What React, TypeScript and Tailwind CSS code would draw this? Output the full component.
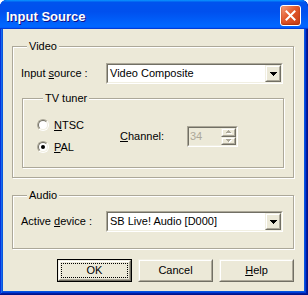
import React from "react";

type BoxProps = {
  className?: string;
  inner?: string;
  children?: React.ReactNode;
};

// classic 3D sunken edge (edit fields, combo boxes)
function Sunken({ className = "", inner = "", children }: BoxProps) {
  return (
    <div className={`border border-t-[#aca899] border-l-[#aca899] border-r-white border-b-white ${className}`}>
      <div className={`h-full border border-t-[#716f64] border-l-[#716f64] border-r-[#f1efe2] border-b-[#f1efe2] ${inner}`}>
        {children}
      </div>
    </div>
  );
}

// classic 3D raised edge (push buttons)
function Raised({ className = "", inner = "", children }: BoxProps) {
  return (
    <div className={`border border-t-[#f1efe2] border-l-[#f1efe2] border-r-[#716f64] border-b-[#716f64] ${className}`}>
      <div className={`h-full border border-t-white border-l-white border-r-[#aca899] border-b-[#aca899] bg-[#ece9d8] ${inner}`}>
        {children}
      </div>
    </div>
  );
}

function DownArrow() {
  return (
    <svg width="7" height="4" viewBox="0 0 7 4" shapeRendering="crispEdges">
      <rect x="0" y="0" width="7" height="1" fill="#000" />
      <rect x="1" y="1" width="5" height="1" fill="#000" />
      <rect x="2" y="2" width="3" height="1" fill="#000" />
      <rect x="3" y="3" width="1" height="1" fill="#000" />
    </svg>
  );
}

function SpinArrow({ up }: { up?: boolean }) {
  const rows = up ? [[2, 0, 1], [1, 1, 3], [0, 2, 5]] : [[0, 0, 5], [1, 1, 3], [2, 2, 1]];
  return (
    <svg width="6" height="4" viewBox="0 0 6 4" shapeRendering="crispEdges">
      {rows.map(([x, y, w]) => (
        <rect key={`w${y}`} x={x + 1} y={y + 1} width={w} height="1" fill="#fff" />
      ))}
      {rows.map(([x, y, w]) => (
        <rect key={`g${y}`} x={x} y={y} width={w} height="1" fill="#aca899" />
      ))}
    </svg>
  );
}

function Combo({ text }: { text: string }) {
  return (
    <Sunken className="w-[177px] h-[21px]" inner="bg-white flex items-center">
      <span className="flex-1 pl-[2px] leading-[13px] whitespace-nowrap">{text}</span>
      <Raised className="w-[16px] h-[17px] shrink-0" inner="flex items-center justify-center">
        <DownArrow />
      </Raised>
    </Sunken>
  );
}

function Radio({ checked, children }: { checked?: boolean; children: React.ReactNode }) {
  return (
    <div className="h-[16px] flex items-center gap-[5px]">
      <div className="w-[12px] h-[12px] rounded-full border border-t-[#aca899] border-l-[#aca899] border-r-white border-b-white">
        <div className="w-full h-full rounded-full border border-t-[#716f64] border-l-[#716f64] border-r-[#f1efe2] border-b-[#f1efe2] bg-white flex items-center justify-center">
          {checked && <div className="w-[4px] h-[4px] rounded-full bg-black" />}
        </div>
      </div>
      <span className="leading-[13px]">{children}</span>
    </div>
  );
}

const groupBox =
  "border border-[#aca899] shadow-[inset_1px_1px_0_#fff,1px_1px_0_#fff]";
const legend = "ml-[6px] px-[2px] leading-[13px] bg-[#ece9d8]";

export default function App() {
  return (
    <div className="w-[308px] h-[295px] flex flex-col rounded-t-[7px] overflow-hidden bg-[#0855dd] shadow-[inset_-1px_-1px_#00138c,inset_1px_1px_#0831d9,inset_-2px_-2px_#001ea0,inset_2px_2px_#166aee,inset_-3px_-3px_#003bda,inset_3px_3px_#0855dd] font-['Liberation_Sans',Arial,sans-serif] text-[11px] text-black select-none">
      {/* Title bar */}
      <div className="h-[29px] shrink-0 flex items-start pl-[6px] pr-[7px] pt-[4px] bg-[linear-gradient(180deg,#0997ff,#0053ee_8%,#0050ee_40%,#06f_88%,#06f_93%,#005bff_95%,#003dd7_96%,#003dd7)]">
        <span className="flex-1 mt-[5px] text-white font-bold text-[13px] leading-[15px] [text-shadow:1px_1px_#0f1089]">
          Input Source
        </span>
        <div className="mt-[1px] w-[21px] h-[21px] rounded-[3px] border border-white bg-[linear-gradient(135deg,#f6a27f,#e2582b_45%,#c63d16)] shadow-[inset_0_-1px_2px_#a8300c] flex items-center justify-center">
          <svg width="11" height="11" viewBox="0 0 11 11">
            <path d="M1.5 1.5L9.5 9.5M9.5 1.5L1.5 9.5" stroke="#fff" strokeWidth="2" strokeLinecap="square" />
          </svg>
        </div>
      </div>

      {/* Client area */}
      <div className="flex-1 ml-[3px] mr-[4px] mb-[4px] bg-[#ece9d8] flex flex-col pt-[11px] pl-[9px]">
        <fieldset className={`w-[282px] pl-[8px] pt-[10px] pb-[9px] ${groupBox}`}>
          <legend className={legend}>Video</legend>
          <div className="flex items-center h-[21px]">
            <span className="w-[85px] leading-[13px]">
              Input <span className="underline">s</span>ource :
            </span>
            <Combo text="Video Composite" />
          </div>

          <fieldset className={`mt-[8px] ml-[1px] w-[262px] pl-[14px] pt-[12px] pb-[12px] ${groupBox}`}>
            <legend className={legend}>TV tuner</legend>
            <div className="flex items-center">
              <div className="w-[83px] flex flex-col gap-[6px]">
                <Radio>
                  <span className="underline">N</span>TSC
                </Radio>
                <Radio checked>
                  <span className="underline">P</span>AL
                </Radio>
              </div>
              <span className="w-[67px] leading-[13px]">
                <span className="underline">C</span>hannel:
              </span>
              <Sunken className="w-[51px] h-[21px]" inner="bg-[#ece9d8] flex">
                <span className="flex-1 pl-[1px] self-center leading-[13px] text-[#aca899]">34</span>
                <div className="w-[15px] flex flex-col">
                  <Raised className="h-[9px]" inner="flex items-center justify-center">
                    <SpinArrow up />
                  </Raised>
                  <Raised className="h-[8px]" inner="flex items-center justify-center">
                    <SpinArrow />
                  </Raised>
                </div>
              </Sunken>
            </div>
          </fieldset>
        </fieldset>

        <fieldset className={`mt-[11px] w-[282px] pl-[8px] pt-[9px] pb-[16px] ${groupBox}`}>
          <legend className={legend}>Audio</legend>
          <div className="flex items-center h-[21px]">
            <span className="w-[85px] leading-[13px]">
              Active <span className="underline">d</span>evice :
            </span>
            <Combo text="SB Live! Audio [D000]" />
          </div>
        </fieldset>

        {/* Buttons */}
        <div className="mt-[10px] flex justify-end gap-[6px] pr-[10px]">
          <div className="w-[75px] h-[23px] border border-black">
            <Raised className="h-full" inner="flex">
              <div className="flex-1 m-[1px] border border-dotted border-black flex items-center justify-center leading-[13px]">
                OK
              </div>
            </Raised>
          </div>
          <Raised className="w-[75px] h-[23px]" inner="flex items-center justify-center leading-[13px]">
            Cancel
          </Raised>
          <Raised className="w-[75px] h-[23px]" inner="flex items-center justify-center leading-[13px]">
            <span>
              <span className="underline">H</span>elp
            </span>
          </Raised>
        </div>
      </div>
    </div>
  );
}
